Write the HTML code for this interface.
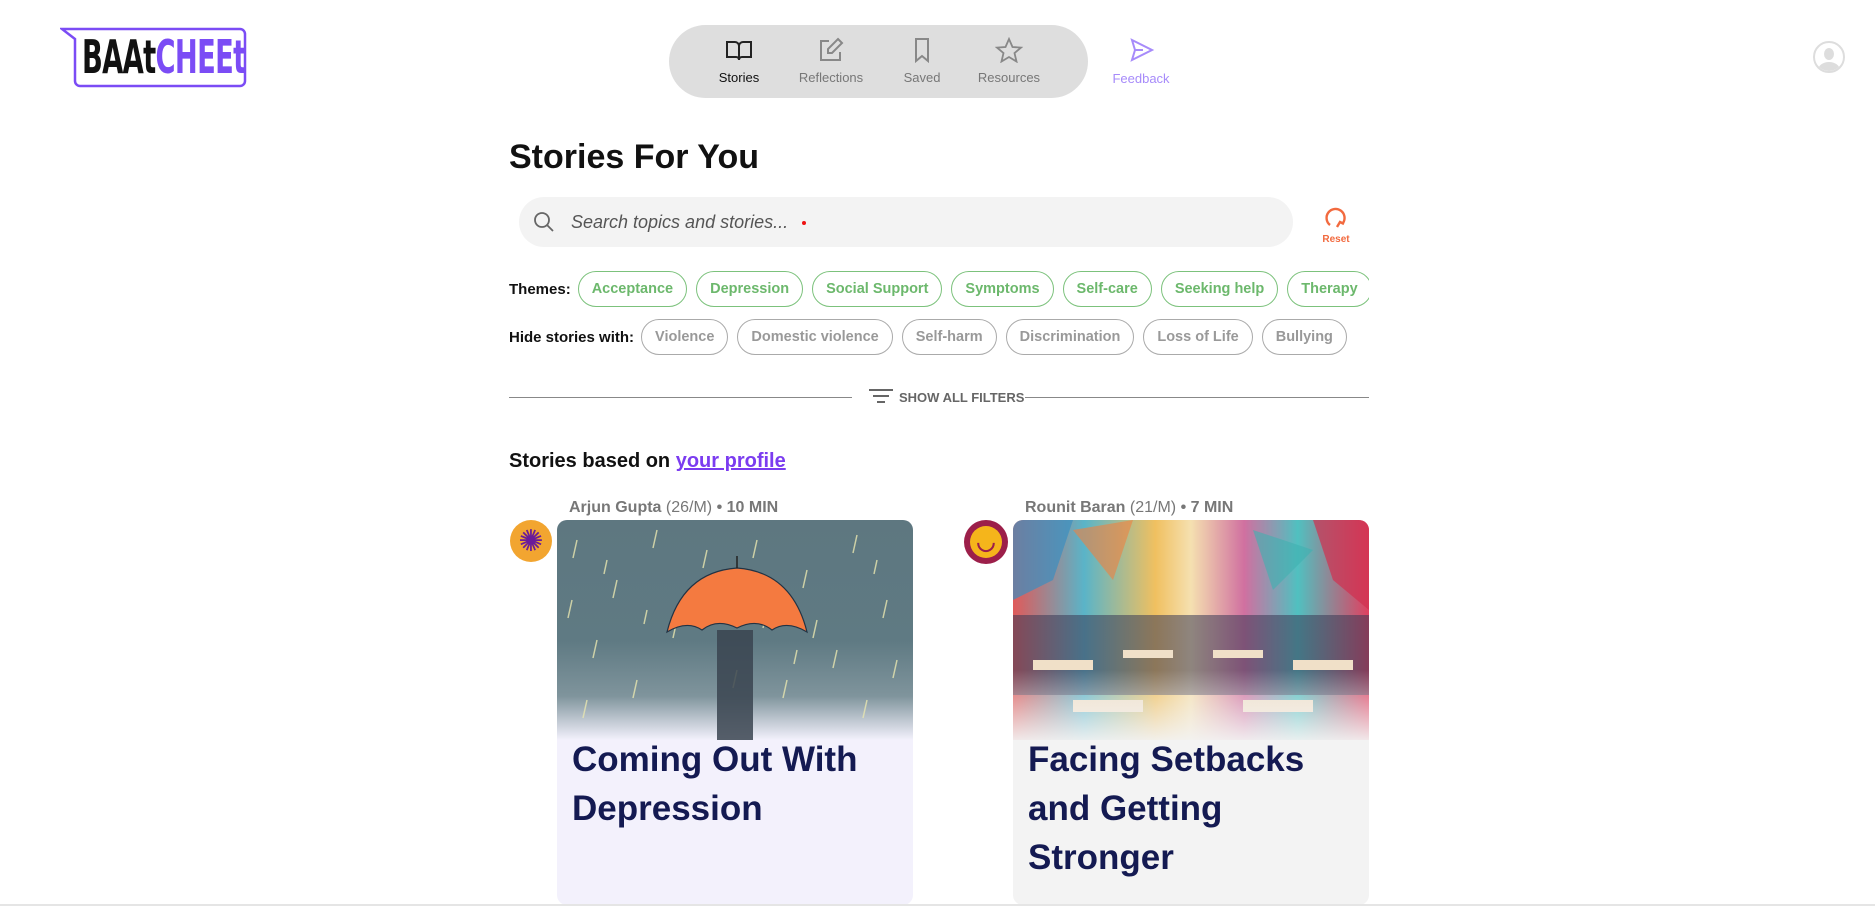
<!DOCTYPE html>
<html><head><meta charset="utf-8"><style>
*{box-sizing:border-box;margin:0;padding:0}
body{width:1875px;height:906px;overflow:hidden;background:#fff;font-family:"Liberation Sans",sans-serif;position:relative;color:#111}
.abs{position:absolute}
.nav{left:669px;top:25px;width:419px;height:73px;background:#dedede;border-radius:37px}
.ni{position:absolute;top:12px;text-align:center;font-size:13px;color:#777;width:90px}
.ni svg{display:block;margin:0 auto 7px}
.chip{display:inline-flex;align-items:center;height:36px;border-radius:18px;padding:0 13px;font-size:14.5px;font-weight:bold;margin-right:9px;white-space:nowrap}
.g{border:1.5px solid #7cc27c;color:#6cb86c}
.h{border:1.5px solid #aaa;color:#999}
.row{left:509px;width:860px;overflow:hidden;white-space:nowrap;display:flex;align-items:center}
.lab{font-size:15px;font-weight:bold;margin-right:7px}
.meta{font-size:16px;color:#777;font-weight:bold}
.meta span{font-weight:normal}
.card{border-radius:10px;overflow:hidden;width:356px;height:385px}
.title{font-size:35px;font-weight:bold;color:#141a52;line-height:49px;padding:0 15px;position:absolute;top:215px}
</style></head><body>
<div class="abs" style="left:60px;top:27px;width:187px;height:61px">
<svg width="187" height="61" viewBox="0 0 187 61"><path d="M2 2 H180 a5 5 0 0 1 5 5 V54 a5 5 0 0 1 -5 5 H20 a5 5 0 0 1 -5 -5 V12 Z" fill="none" stroke="#7b4cf5" stroke-width="2.5"/></svg>
<div class="abs" style="left:22px;top:4px;font-family:'DejaVu Sans Condensed','Liberation Sans',sans-serif;font-weight:bold;font-size:46px;letter-spacing:-1px;line-height:52px;transform:scaleX(0.66);transform-origin:left"><span style="color:#111">BAAt</span><span style="color:#7b4cf5">CHEEt</span></div>
</div>
<div class="abs nav">
<div class="ni" style="left:25px;color:#111">
<svg width="30" height="26" viewBox="0 0 30 26" fill="none" stroke="#222" stroke-width="2"><path d="M3 5h8a4 4 0 0 1 4 4v14a3 3 0 0 0-3-3H3z M27 5h-8a4 4 0 0 0-4 4v14a3 3 0 0 1 3-3h9z"/></svg>Stories</div>
<div class="ni" style="left:117px"><svg width="30" height="26" viewBox="0 0 30 26" fill="none" stroke="#888" stroke-width="2"><path d="M13 4H5v19h19v-8M22 2l4 4-10 10h-4v-4z"/></svg>Reflections</div>
<div class="ni" style="left:208px"><svg width="30" height="26" viewBox="0 0 30 26" fill="none" stroke="#888" stroke-width="2"><path d="M9 2h12v22l-6-5-6 5z"/></svg>Saved</div>
<div class="ni" style="left:295px"><svg width="30" height="26" viewBox="0 0 30 26" fill="none" stroke="#888" stroke-width="1.8"><path d="M15 2l3.5 8 8.5.6-6.5 5.5 2 8.4-7.5-4.5-7.5 4.5 2-8.4L3 10.6l8.5-.6z"/></svg>Resources</div>
</div>
<div class="abs" style="left:1096px;top:37px;width:90px;text-align:center;font-size:13px;color:#a78bfa">
<svg width="30" height="26" viewBox="0 0 30 26" fill="none" stroke="#a78bfa" stroke-width="2"><path d="M6 3l20 10L6 23l3-10z M9 13h8"/></svg><div style="margin-top:5px">Feedback</div></div>
<div class="abs" style="left:1813px;top:41px;width:32px;height:32px;border-radius:50%;border:2px solid #ddd;overflow:hidden">
<div class="abs" style="left:9px;top:5px;width:10px;height:12px;border-radius:50%;background:#ddd"></div>
<div class="abs" style="left:3px;top:19px;width:22px;height:16px;border-radius:50%;background:#ddd"></div></div>

<div class="abs" style="left:509px;top:138px;font-size:34px;font-weight:bold">Stories For You</div>
<div class="abs" style="left:519px;top:197px;width:774px;height:50px;background:#f3f3f3;border-radius:25px">
<svg class="abs" style="left:14px;top:14px" width="22" height="22" viewBox="0 0 22 22" fill="none" stroke="#666" stroke-width="1.8"><circle cx="9" cy="9" r="7"/><path d="M14 14l6 6"/></svg>
<div class="abs" style="left:52px;top:15px;font-size:18px;font-style:italic;color:#555">Search topics and stories...</div>
<div class="abs" style="left:283px;top:24px;width:4px;height:4px;border-radius:50%;background:#e11"></div>
</div>
<div class="abs" style="left:1318px;top:205px;width:36px;text-align:center;color:#f26a3f;font-size:10px;font-weight:bold">
<svg width="26" height="26" viewBox="0 0 26 26" fill="none" stroke="#f26a3f" stroke-width="2.4"><path d="M7 20A9 9 0 1 1 20 18M14 22l3-5 4 2"/></svg><div>Reset</div></div>

<div class="abs row" style="top:271px"><span class="lab">Themes:</span>
<span class="chip g">Acceptance</span><span class="chip g">Depression</span><span class="chip g">Social Support</span><span class="chip g">Symptoms</span><span class="chip g">Self-care</span><span class="chip g">Seeking help</span><span class="chip g">Therapy</span></div>
<div class="abs row" style="top:319px"><span class="lab">Hide stories with:</span>
<span class="chip h">Violence</span><span class="chip h">Domestic violence</span><span class="chip h">Self-harm</span><span class="chip h">Discrimination</span><span class="chip h">Loss of Life</span><span class="chip h">Bullying</span></div>

<div class="abs" style="left:509px;top:397px;width:343px;height:1px;background:#888"></div>
<div class="abs" style="left:1025px;top:397px;width:344px;height:1px;background:#888"></div>
<svg class="abs" style="left:869px;top:388px" width="24" height="18" viewBox="0 0 24 18" stroke="#666" stroke-width="2"><path d="M0 2h24M4 8h16M8 14h8"/></svg>
<div class="abs" style="left:899px;top:390px;font-size:13px;font-weight:bold;color:#666">SHOW ALL FILTERS</div>

<div class="abs" style="left:509px;top:450px;font-size:20px;font-weight:bold">Stories based on <span style="color:#7b3cf0;text-decoration:underline">your profile</span></div>

<div class="abs meta" style="left:569px;top:499px">Arjun Gupta <span>(26/M)</span> • 10 MIN</div>
<div class="abs meta" style="left:1025px;top:499px">Rounit Baran <span>(21/M)</span> • 7 MIN</div>

<div class="abs" style="left:510px;top:520px;width:42px;height:42px;border-radius:50%;background:#f2a530;display:flex;align-items:center;justify-content:center;color:#6a1b9a;font-size:30px">✺</div>
<div class="abs" style="left:964px;top:520px;width:44px;height:44px;border-radius:50%;background:#9c1f4a;display:flex;align-items:center;justify-content:center"><div style="width:32px;height:32px;border-radius:50%;background:#f5b51b;color:#9c1f4a;font-size:22px;line-height:32px;text-align:center;font-weight:bold">◡</div></div>

<div class="abs card" style="left:557px;top:520px;background:#f3f1fc">
<div class="abs" style="left:0;top:0;width:356px;height:220px;background:linear-gradient(#5e7780 0%,#5f7a83 55%,#7f949c 80%,#f3f1fc 100%)">
<svg width="356" height="220" viewBox="0 0 356 220">
<g stroke="#e8e6b0" stroke-width="1.5" opacity=".8">
<path d="M20 20l-4 18M60 60l-4 18M100 10l-4 18M40 120l-4 18M80 160l-4 18M150 30l-4 18M200 20l-4 18M250 50l-4 18M300 15l-4 18M330 80l-4 18M280 130l-4 18M230 160l-4 18M310 180l-4 18M30 180l-4 18M120 100l-4 18M260 100l-4 18M340 140l-4 18M15 80l-4 18M180 150l-4 18M210 90l-4 18M50 40l-3 14M320 40l-3 14M90 90l-3 14M240 130l-3 14"/></g>
<rect x="160" y="110" width="36" height="110" fill="#3a4450" opacity=".85"/>
<path d="M110 112 Q125 52 180 48 Q235 52 250 112 Q230 100 215 110 Q200 98 180 108 Q160 98 145 110 Q130 100 110 112z" fill="#f47a40" stroke="#234" stroke-width="1.2"/>
<path d="M180 48v-12" stroke="#222" stroke-width="1.5"/>
</svg></div>
<div class="title">Coming Out With Depression</div>
</div>

<div class="abs card" style="left:1013px;top:520px;background:#f3f3f3">
<div class="abs" style="left:0;top:0;width:356px;height:220px;background:linear-gradient(90deg,#e05a5a,#5ab4c8 20%,#f0c060 40%,#f5e0b0 50%,#d070a0 65%,#50c0c0 80%,#e04060);">
<svg width="356" height="220" viewBox="0 0 356 220">
<polygon points="0,0 60,0 40,60 0,80" fill="#3a8fc0" opacity=".7"/>
<polygon points="300,0 356,0 356,90 320,60" fill="#d03050" opacity=".7"/>
<polygon points="60,10 120,0 100,60" fill="#f08040" opacity=".6"/>
<polygon points="240,10 300,30 260,70" fill="#40b0b0" opacity=".6"/>
<rect x="0" y="95" width="356" height="80" fill="#3a3a55" opacity=".55"/>
<g fill="#f0e0c8"><rect x="20" y="140" width="60" height="10"/><rect x="110" y="130" width="50" height="8"/><rect x="200" y="130" width="50" height="8"/><rect x="280" y="140" width="60" height="10"/><rect x="60" y="180" width="70" height="12"/><rect x="230" y="180" width="70" height="12"/></g>
</svg></div>
<div class="abs" style="left:0;top:150px;width:356px;height:75px;background:linear-gradient(#f3f3f300,#f3f3f3)"></div>
<div class="title">Facing Setbacks and Getting Stronger</div>
</div>
<div class="abs" style="left:0;top:904px;width:1875px;height:2px;background:#e5e5e5"></div>
</body></html>
